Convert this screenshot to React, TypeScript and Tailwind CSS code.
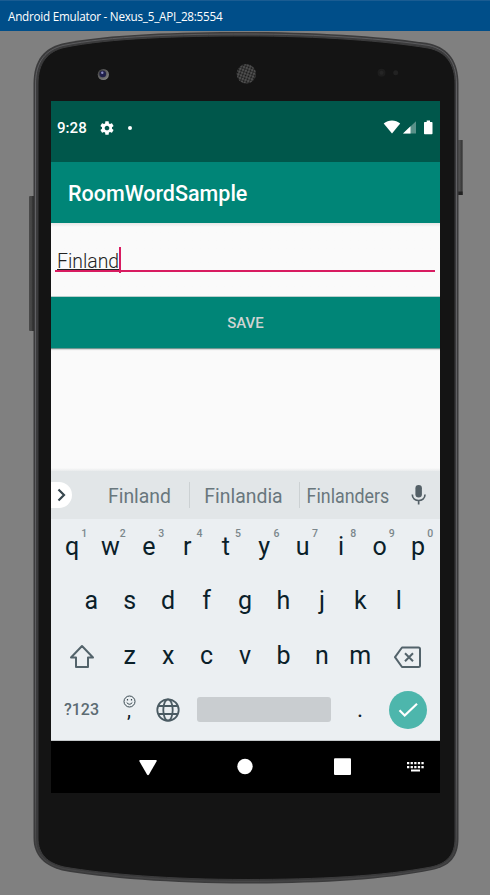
import React from 'react';

const OUTLINE =
  'M33.5 84 C33.5 59 45 48 62 43.5 C108 34 180 32 246 32 C322 32 388 37 430 43.5 C449 48 458.5 62 458.5 84 V838 C458.5 857 450 866 432 870 C384 880 318 883.5 246 883.5 C172 883.5 104 878 62 870.5 C45 866 33.5 856 33.5 838 Z';
const FACE =
  'M38 84 C38 62 48 51.5 64 47.5 C110 38 180 36 246 36 C320 36 386 41 428 48 C446 51.5 455 64 455 84 V838 C455 855 447 863.5 431 867 C384 876 318 879.5 246 879.5 C172 879.5 104 874 64 867 C47 863 38 854 38 838 Z';

function DeviceShell() {
  return (
    <svg className="absolute inset-0" width="490" height="895" viewBox="0 0 490 895" fill="none">
      <defs>
        <linearGradient id="leftButton" x1="29" x2="34" gradientUnits="userSpaceOnUse">
          <stop stopColor="#4a4a4a" />
          <stop offset=".5" stopColor="#444" />
          <stop offset="1" stopColor="#222" />
        </linearGradient>
        <linearGradient id="rightButton" x1="459" x2="463" gradientUnits="userSpaceOnUse">
          <stop stopColor="#555" />
          <stop offset="1" stopColor="#2c2c2c" />
        </linearGradient>
        <linearGradient id="rim" y1="32" y2="884" x1="0" x2="0" gradientUnits="userSpaceOnUse">
          <stop stopColor="#5a5a5c" />
          <stop offset=".1" stopColor="#626266" />
          <stop offset=".85" stopColor="#5c5c5f" />
          <stop offset=".96" stopColor="#454546" />
        </linearGradient>
        <pattern id="mesh" width="2.9" height="2.9" patternUnits="userSpaceOnUse" patternTransform="rotate(20)">
          <rect width="2.9" height="2.9" fill="#5a5a5a" />
          <circle cx="1.45" cy="1.45" r="1.1" fill="#161616" />
        </pattern>
        <radialGradient id="lens" cx=".35" cy=".35" r=".8">
          <stop stopColor="#292929" />
          <stop offset="1" stopColor="#929292" />
        </radialGradient>
      </defs>
      <rect x="29" y="196" width="6" height="135" rx="1" fill="url(#leftButton)" />
      <rect x="458" y="140" width="4.6" height="55" fill="url(#rightButton)" />
      <path d="M458 191.5h4.6v3.5H458z" fill="#222" />
      <path d={OUTLINE} fill="#3b3b3c" />
      <path d={FACE} fill="#141414" stroke="#3b3b3c" strokeWidth="1" />
      <path
        d="M35.5 84C35.5 61 46 50 63 45.5C109 36 180 34 246 34C321 34 387 39 429 45.5C448 50 456.500 63 456.500 84V838C456.500 856 448 865 431 868.500C384 878 318 881.500 246 881.500C172 881.500 104 876 63 868.500C46 864.500 35.500 855 35.500 838Z"
        stroke="url(#rim)"
      />
      <circle cx="103.3" cy="74.5" r="5.6" fill="url(#lens)" />
      <circle cx="102.8" cy="74" r="3.3" fill="#20204a" />
      <circle cx="102.3" cy="72.8" r="1.2" fill="#8d8dc4" />
      <circle cx="246.3" cy="73.8" r="9.7" fill="url(#mesh)" />
      <circle cx="381.5" cy="72.8" r="4" fill="#1d1d1d" />
      <circle cx="381.5" cy="72.8" r="2" fill="#252525" />
      <circle cx="395.7" cy="72.8" r="2.5" fill="#222" />
    </svg>
  );
}

function StatusBar() {
  return (
    <div className="flex h-[61px] items-start bg-[#00574b] pt-[17px] text-white">
      <div className="flex h-[19px] flex-1 items-center pl-[6px]">
        <span className="w-[41.5px] pt-[2px] text-[15.1px] leading-[19px] font-medium">9:28</span>
        <svg width="16" height="16" viewBox="0 0 24 24" fill="currentColor">
          <path d="M19.43 12.98c.04-.32.07-.64.07-.98s-.03-.66-.07-.98l2.11-1.65c.19-.15.24-.42.12-.64l-2-3.46c-.12-.22-.39-.3-.61-.22l-2.49 1c-.52-.4-1.08-.73-1.69-.98l-.38-2.65C14.46 2.18 14.25 2 14 2h-4c-.25 0-.46.18-.49.42l-.38 2.65c-.61.25-1.17.59-1.69.98l-2.49-1c-.23-.09-.49 0-.61.22l-2 3.46c-.13.22-.07.49.12.64l2.11 1.65c-.04.32-.07.65-.07.98s.03.66.07.98l-2.11 1.65c-.19.15-.24.42-.12.64l2 3.46c.12.22.39.3.61.22l2.49-1c.52.4 1.08.73 1.69.98l.38 2.65c.03.24.24.42.49.42h4c.25 0 .46-.18.49-.42l.38-2.65c.61-.25 1.17-.59 1.69-.98l2.49 1c.23.09.49 0 .61-.22l2-3.46c.12-.22.07-.49-.12-.64l-2.11-1.65zM12 15.5c-1.93 0-3.5-1.57-3.5-3.5s1.57-3.5 3.5-3.5 3.5 1.57 3.5 3.5-1.57 3.5-3.5 3.5z" />
        </svg>
        <span className="ml-[13.5px] size-1 rounded-full bg-white" />
      </div>
      <div className="flex h-[19px] items-center pr-[7px]">
        <svg width="50" height="16" viewBox="0 0 50 16">
          <path d="M.7 3.4C5.5-.5 12.500-.5 17.200 3.400L9 13.500Z" fill="#fff" />
          <path d="M20 13.500L33 1.200V13.500Z" fill="#fff" opacity=".35" />
          <path d="M20 13.500L27.500 6.200V13.500Z" fill="#fff" />
          <path d="M41.700 2H43.700V.5H47V2H48.800Q49.500 2 49.500 2.800V13.600Q49.500 14.300 48.800 14.300H41.700Q41 14.300 41 13.600V2.800Q41 2 41.700 2Z" fill="#fff" />
        </svg>
      </div>
    </div>
  );
}

function AppContent() {
  return (
    <div className="flex h-[248px] flex-col bg-[#fafafa]">
      <div className="flex h-[73px] flex-col bg-linear-to-b from-[#e6e6e6] to-[#fafafa] to-[4px] px-[4px] pr-[5px] pt-[24px]">
        <div className="flex h-[25px] items-start border-b-2 border-[#d81b60] pl-[2px]">
          <span className="h-[23px] border-b border-[#222] text-[19.4px] leading-[29px] font-light text-[#222]">Finland</span>
          <span className="h-[26px] w-[2px] shrink-0 bg-[#d81b60]" />
        </div>
      </div>
      <button className="h-[53px] border-y border-t-[#b9cfcc] border-b-[#6f9691] bg-[#008577] pt-px text-[15px] leading-[51px] font-medium text-[#cfd3d2] shadow-[0_1px_1px_#0002]">
        SAVE
      </button>
      <div className="mt-auto h-[3px] bg-linear-to-b from-[#fafafa] to-[#e9ebec]" />
    </div>
  );
}

function SuggestionStrip() {
  return (
    <div className="flex h-[48px] items-center bg-[#e2e6e8] text-[19.4px] text-[#69777d]">
      <div className="flex h-[26px] w-[21px] items-center rounded-r-full bg-white">
        <svg className="ml-[5px]" width="12" height="14" viewBox="0 0 12 14" fill="none" stroke="#37474f" strokeWidth="2.200">
          <path d="M2.500 1.500L8 7L2.500 12.500" />
        </svg>
      </div>
      <span className="ml-[19px] w-[98px] pt-[3px] pr-px text-center">Finland</span>
      <span className="h-[26px] w-px bg-[#ccd1d3]" />
      <span className="w-[109px] pt-[3px] pr-[2px] text-center">Finlandia</span>
      <span className="h-[26px] w-px bg-[#ccd1d3]" />
      <span className="flex w-[96px] justify-center pt-[3px]"><span className="scale-x-[.92]">Finlanders</span></span>
      <svg className="ml-[9px]" width="27" height="25" viewBox="0 0 27 25" fill="none">
        <rect x="10.400" y="2" width="6.500" height="12.500" rx="3.250" fill="#546067" />
        <path d="M7.300 11.500C7.300 19.500 20 19.500 20 11.500M13.650 17.500V21.500" stroke="#546067" strokeWidth="1.700" />
      </svg>
    </div>
  );
}

function Key({ label, hint }: { label: string; hint?: string }) {
  return (
    <div className="relative w-[38.45px] text-center text-[25px] leading-[54.7px] text-[#0a2029]">
      {label}
      {hint && <span className="absolute top-[7px] right-[4px] text-[10.5px] leading-[14px] font-medium text-[#7b878c]">{hint}</span>}
    </div>
  );
}

function Keyboard() {
  return (
    <div className="h-[222px] border-b border-[#c4c7c9] bg-[#ebeff2]">
      <div className="flex h-[54.7px] justify-center pt-[1px] pr-px">
        {[...'qwertyuiop'].map((k, i) => <Key key={k} label={k} hint={String((i + 1) % 10)} />)}
      </div>
      <div className="flex h-[54.7px] justify-center pr-px">
        {[...'asdfghjkl'].map((k) => <Key key={k} label={k} />)}
      </div>
      <div className="flex h-[54.7px] items-center justify-center pt-[2px] pr-px">
        <div className="flex w-[57.700px] justify-center">
          <svg width="26" height="26" viewBox="0 0 26 26" fill="none" stroke="#53636b" strokeWidth="2" strokeLinejoin="round">
            <path d="M13 2L24 13.500H19V23H7V13.500H2Z" />
          </svg>
        </div>
        {[...'zxcvbnm'].map((k) => <Key key={k} label={k} />)}
        <div className="flex w-[57.700px] justify-center">
          <svg width="28" height="24" viewBox="0 0 28 24" fill="none" stroke="#53636b" strokeWidth="2" strokeLinejoin="round">
            <path d="M8 2.500H24.500Q26 2.500 26 4V20.500Q26 22 24.500 22H8L1 12.200ZM11 8.200L19 16.200M19 8.200L11 16.200" />
          </svg>
        </div>
      </div>
      <div className="flex h-[54px] items-center pl-[2px]">
        <span className="w-[57px] text-center text-[16px] font-medium text-[#5c6b72]">?123</span>
        <div className="flex w-[38px] flex-col items-center pb-[3px] text-[#0a2029]">
          <svg width="13" height="13" viewBox="0 0 13 13" fill="none" stroke="#37474f">
            <circle cx="6.500" cy="6.500" r="5.500" />
            <path d="M3.700 7.500Q6.500 11 9.300 7.500" />
            <path d="M4.500 4V5.500M8.500 4V5.500" strokeWidth="1.200" />
          </svg>
          <span className="h-[14px] text-[20px] leading-[5px]">,</span>
        </div>
        <div className="flex w-[39px] justify-center pb-px">
          <svg width="24" height="24" viewBox="0 0 24 24" fill="none" stroke="#4b5b63" strokeWidth="1.800">
            <circle cx="12" cy="12" r="10.700" />
            <ellipse cx="12" cy="12" rx="4.700" ry="10.700" />
            <path d="M2.200 8H21.800M2.200 16H21.800" />
          </svg>
        </div>
        <div className="mb-px ml-[10px] h-[25px] w-[133.5px] rounded-[3px] bg-[#c9cdd0]" />
        <span className="ml-[10px] w-[39px] text-center text-[23px] leading-[54px] text-[#0a2029]">.</span>
        <div className="mb-px ml-[9.5px] flex size-[38px] items-center justify-center rounded-full bg-[#4db6ac]">
          <svg width="22" height="18" viewBox="0 0 22 18" fill="none" stroke="#fff" strokeWidth="2.200">
            <path d="M2.500 9.300L7.700 14.500L20 2.700" />
          </svg>
        </div>
      </div>
    </div>
  );
}

function NavigationBar() {
  return (
    <div className="h-[52px] bg-black">
      <svg width="389" height="52" viewBox="51 741 389 52" fill="#fff">
        <path d="M140 760H156Q157.200 760.200 156.500 761.500L149 774.500Q148 776 147 774.500L139.500 761.500Q139 760.200 140 760Z" />
        <circle cx="245" cy="766.500" r="7.700" />
        <rect x="334" y="758.300" width="17" height="16.700" rx="1" />
        <path d="M407 763.200H424M407 767.200H424" stroke="#fff" strokeWidth="2.300" strokeDasharray="2.300 1.300" />
        <rect x="411" y="769.500" width="9" height="2" />
      </svg>
    </div>
  );
}

export default function App() {
  return (
    <div className="relative flex h-[895px] w-[490px] flex-col overflow-hidden bg-[#808080] font-['Roboto',sans-serif]">
      <DeviceShell />
      <header className="relative h-[31px] border-t border-[#1a5c92] bg-[#004e89] pl-[8px] font-['Open_Sans',sans-serif] text-[11.7px] leading-[30px] text-white">
        <span className="tracking-[-0.24px]">Android Emulator - Nexus_5_API_28:5554</span>
      </header>
      <main className="relative mt-[70px] ml-[51px] flex w-[389px] flex-col">
        <StatusBar />
        <h1 className="h-[61px] bg-[#008577] pl-[17px] text-[21.5px] leading-[64px] font-medium text-white">RoomWordSample</h1>
        <AppContent />
        <SuggestionStrip />
        <Keyboard />
        <NavigationBar />
      </main>
    </div>
  );
}
